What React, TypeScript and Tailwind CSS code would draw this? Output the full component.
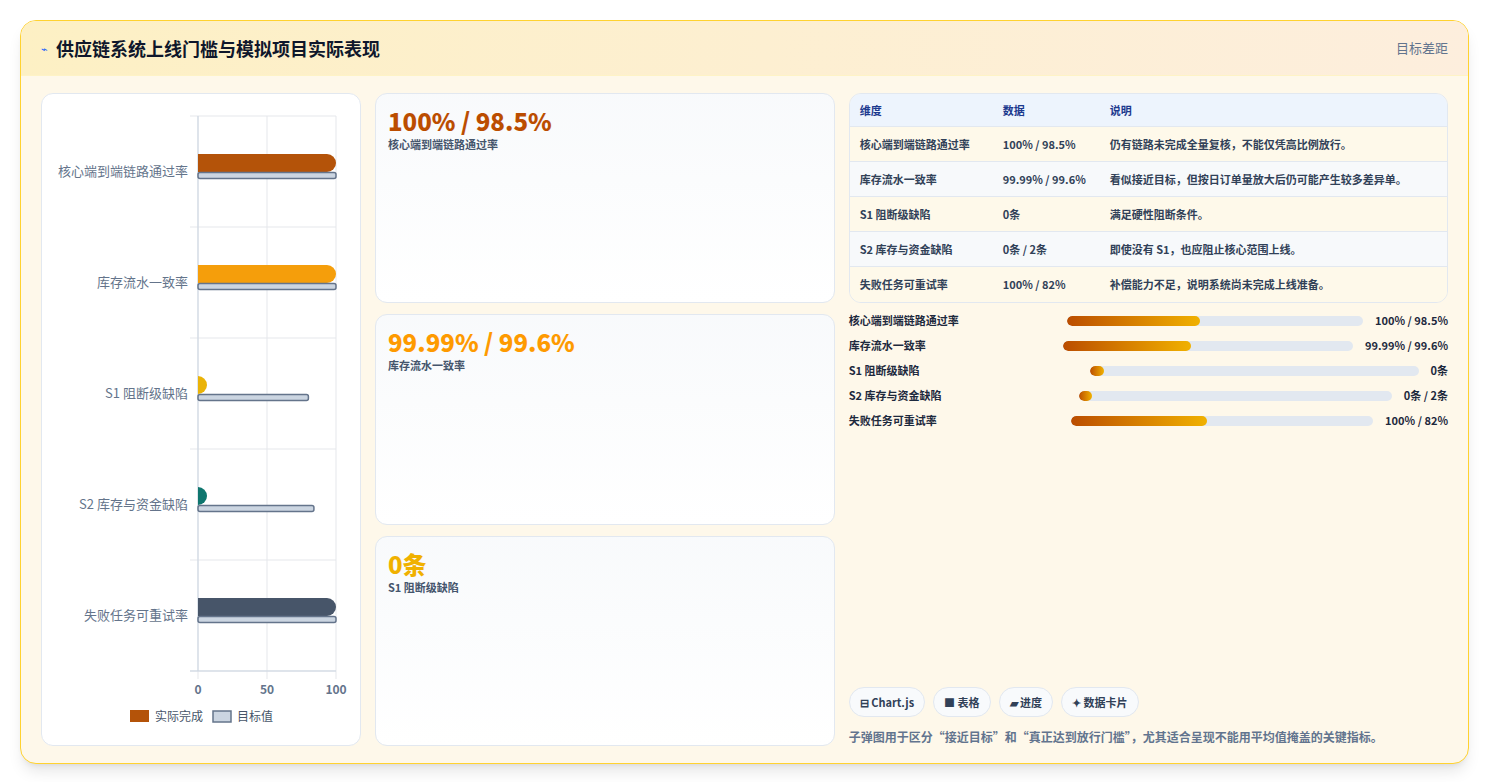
const font = { fontFamily: '"Noto Sans CJK SC", "Noto Sans", sans-serif' }

const cats = [
  { name: '核心端到端链路通过率', actual: 100, target: 100, color: '#b45309' },
  { name: '库存流水一致率', actual: 100, target: 100, color: '#f59e0b' },
  { name: 'S1 阻断级缺陷', actual: 5, target: 80, color: '#eab308' },
  { name: 'S2 库存与资金缺陷', actual: 5, target: 84, color: '#0f766e' },
  { name: '失败任务可重试率', actual: 100, target: 100, color: '#475569' },
]

const rows = [
  ['核心端到端链路通过率', '100% / 98.5%', '仍有链路未完成全量复核，不能仅凭高比例放行。'],
  ['库存流水一致率', '99.99% / 99.6%', '看似接近目标，但按日订单量放大后仍可能产生较多差异单。'],
  ['S1 阻断级缺陷', '0条', '满足硬性阻断条件。'],
  ['S2 库存与资金缺陷', '0条 / 2条', '即使没有 S1，也应阻止核心范围上线。'],
  ['失败任务可重试率', '100% / 82%', '补偿能力不足，说明系统尚未完成上线准备。'],
]

const bars = [
  { name: '核心端到端链路通过率', val: '100% / 98.5%', w: 45 },
  { name: '库存流水一致率', val: '99.99% / 99.6%', w: 44 },
  { name: 'S1 阻断级缺陷', val: '0条', w: 4 },
  { name: 'S2 库存与资金缺陷', val: '0条 / 2条', w: 4 },
  { name: '失败任务可重试率', val: '100% / 82%', w: 45 },
]

function Chart() {
  const x0 = 156
  const sc = 1.38
  return (
    <svg width="320" height="651" viewBox="0 0 320 651">
      {[0, 1, 2, 3, 4, 5].map((i) => (
        <line key={i} x1={148} x2={294} y1={22 + i * 111} y2={22 + i * 111} stroke="#e5e7eb" />
      ))}
      {[0, 50, 100].map((v) => (
        <line key={v} x1={x0 + v * sc} x2={x0 + v * sc} y1={22} y2={585} stroke="#e5e7eb" />
      ))}
      <line x1={x0} x2={x0} y1={22} y2={577} stroke="#cbd5e1" />
      <line x1={148} x2={294} y1={577} y2={577} stroke="#cbd5e1" />
      {cats.map((c, i) => {
        const cy = 22 + i * 111 + 55
        return (
          <g key={c.name}>
            <text x={146} y={cy + 5} textAnchor="end" fontSize="13" fill="#64748b">{c.name}</text>
            <path
              d={`M${x0} ${cy - 17}h${Math.max(c.actual * sc - 9, 0)}a9 9 0 0 1 0 18h-${Math.max(c.actual * sc - 9, 0)}z`}
              fill={c.color}
            />
            <rect x={x0} y={cy + 1.5} width={c.target * sc} height={6} rx={2} fill="#cbd5e1" stroke="#64748b" strokeWidth="1.5" />
          </g>
        )
      })}
      {[0, 50, 100].map((v) => (
        <text key={v} x={x0 + v * sc} y={600} textAnchor="middle" fontSize="12" fontWeight="700" fill="#64748b">{v}</text>
      ))}
      <rect x={88} y={616} width={19} height={12} fill="#b45309" />
      <text x={113} y={627} fontSize="12" fill="#475569">实际完成</text>
      <rect x={171} y={617} width={18} height={11} fill="#cbd5e1" stroke="#64748b" strokeWidth="1.5" />
      <text x={195} y={627} fontSize="12" fill="#475569">目标值</text>
    </svg>
  )
}

function Stat({ value, label, color }: { value: string; label: string; color: string }) {
  return (
    <div className="flex-1 rounded-xl border border-slate-200 bg-gradient-to-b from-slate-50 to-white px-3 py-3">
      <div className={`text-[24px] font-extrabold leading-[30px] ${color}`}>{value}</div>
      <div className="text-[11px] font-semibold text-slate-600">{label}</div>
    </div>
  )
}

export default function App() {
  return (
    <div className="h-[782px] w-[1489px] bg-white pt-5 pl-5" style={font}>
      <div className="flex h-[744px] w-[1449px] flex-col overflow-hidden rounded-2xl border border-amber-300 bg-[#fef8ea] shadow-lg">
        <div className="flex h-[55px] items-center justify-between border-b border-amber-100 bg-gradient-to-r from-[#fdf0c4] to-[#fdeedd] px-5">
          <div className="flex items-center gap-2">
            <span className="text-[11px] text-blue-600">⌁</span>
            <span className="text-[18px] font-bold text-slate-900">供应链系统上线门槛与模拟项目实际表现</span>
          </div>
          <span className="text-[13px] text-slate-500">目标差距</span>
        </div>
        <div className="flex flex-1 gap-[14px] px-5 py-[17px]">
          <div className="w-[320px] rounded-xl border border-slate-200 bg-white">
            <Chart />
          </div>
          <div className="flex w-[461px] flex-col gap-[11px]">
            <Stat value="100% / 98.5%" label="核心端到端链路通过率" color="text-amber-700" />
            <Stat value="99.99% / 99.6%" label="库存流水一致率" color="text-amber-500" />
            <Stat value="0条" label="S1 阻断级缺陷" color="text-yellow-500" />
          </div>
          <div className="flex w-[601px] flex-col">
            <div className="overflow-hidden rounded-xl border border-slate-200">
              <div className="grid h-[33px] grid-cols-[143px_107px_1fr] items-center border-b border-slate-200 bg-[#edf4fd] px-[10px] text-[11px] font-bold text-blue-900">
                <div>维度</div><div>数据</div><div>说明</div>
              </div>
              {rows.map((r, i) => (
                <div
                  key={r[0]}
                  className={`grid h-[35px] grid-cols-[143px_107px_1fr] items-center px-[10px] text-[11px] font-semibold text-slate-700 ${i < 4 ? 'border-b border-slate-200' : ''} ${i % 2 ? 'bg-[#f7f9fb]' : 'bg-[#fef9ea]'}`}
                >
                  <div>{r[0]}</div><div>{r[1]}</div><div>{r[2]}</div>
                </div>
              ))}
            </div>
            <div className="mt-[9px] flex flex-col gap-[8px]">
              {bars.map((b) => (
                <div key={b.name} className="flex h-[17px] items-center gap-1 text-[11px] font-semibold text-slate-800">
                  <div className="flex-[1_1_0]">{b.name}</div>
                  <div className="h-[10px] flex-[1.38_1_0] overflow-hidden rounded-full bg-slate-200">
                    <div className="h-full rounded-full bg-gradient-to-r from-amber-700 to-yellow-500" style={{ width: b.w + '%' }} />
                  </div>
                  <div className="pl-2 font-bold">{b.val}</div>
                </div>
              ))}
            </div>
            <div className="mt-auto flex gap-2">
              {['⊟ Chart.js', '■ 表格', '▰ 进度', '✦ 数据卡片'].map((c) => (
                <span key={c} className="rounded-full border border-slate-200 bg-slate-50 px-[10px] py-[6px] text-[11px] font-bold text-slate-700">{c}</span>
              ))}
            </div>
            <div className="mt-[11px] text-[12px] font-semibold text-slate-500">
              子弹图用于区分“接近目标”和“真正达到放行门槛”，尤其适合呈现不能用平均值掩盖的关键指标。
            </div>
          </div>
        </div>
      </div>
    </div>
  )
}
